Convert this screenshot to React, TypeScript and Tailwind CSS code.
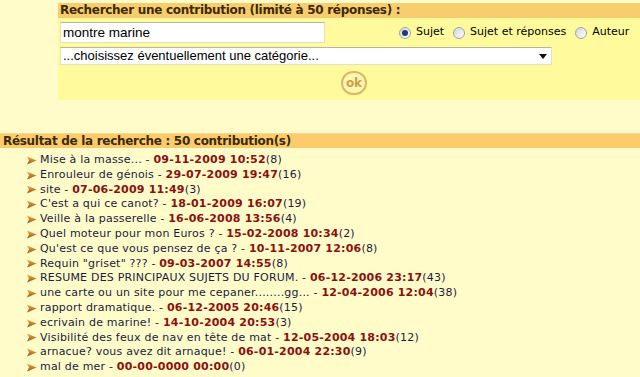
const results: [string, string, string][] = [
  ["Mise à la masse...", "09-11-2009 10:52", "8"],
  ["Enrouleur de génois", "29-07-2009 19:47", "16"],
  ["site", "07-06-2009 11:49", "3"],
  ["C'est a qui ce canot?", "18-01-2009 16:07", "19"],
  ["Veille à la passerelle", "16-06-2008 13:56", "4"],
  ["Quel moteur pour mon Euros ?", "15-02-2008 10:34", "2"],
  ["Qu'est ce que vous pensez de ça ?", "10-11-2007 12:06", "8"],
  ['Requin "griset" ???', "09-03-2007 14:55", "8"],
  ["RESUME DES PRINCIPAUX SUJETS DU FORUM.", "06-12-2006 23:17", "43"],
  ["une carte ou un site pour me cepaner........gg...", "12-04-2006 12:04", "38"],
  ["rapport dramatique.", "06-12-2005 20:46", "15"],
  ["ecrivain de marine!", "14-10-2004 20:53", "3"],
  ["Visibilité des feux de nav en tête de mat", "12-05-2004 18:03", "12"],
  ["arnacue? vous avez dit arnaque!", "06-01-2004 22:30", "9"],
  ["mal de mer", "00-00-0000 00:00", "0"],
];

function Bullet() {
  return (
    <svg width="10" height="9" viewBox="0 0 10 9" className="shrink-0">
      <defs>
        <linearGradient id="bl" x1="0" y1="0" x2="0" y2="1">
          <stop offset="0" stopColor="#f2b24a" />
          <stop offset="1" stopColor="#9a4e10" />
        </linearGradient>
      </defs>
      <polygon points="0,0.5 9.5,4.5 0,8.5 2,4.5" fill="url(#bl)" />
    </svg>
  );
}

function Radio({ checked }: { checked?: boolean }) {
  return (
    <span className="w-[12px] h-[12px] rounded-full border border-[#9ca3af] bg-gradient-to-br from-[#d6d6d6] to-white flex items-center justify-center">
      {checked && <span className="w-[6px] h-[6px] rounded-full bg-[#1f3a78]" />}
    </span>
  );
}

export default function App() {
  return (
    <div className="w-[640px] h-[377px] overflow-hidden bg-[#fffcc9] text-[#1b1b3f] font-['DejaVu_Sans',Verdana,sans-serif]">
      <div className="pl-[58px] pt-[3px]">
        <div className="h-[15px] bg-[#f8cd6e] pl-[2px] text-[12px] leading-[15px] font-bold text-[#3c2a0c] tracking-[-0.3px]">
          Rechercher une contribution (limité à 50 réponses) :
        </div>
        <div className="bg-[#fffa9c] h-[82px] pl-[2px] pt-[4px]">
          <div className="flex items-center">
            <div className="w-[265px] h-[21px] bg-white border border-[#e4e0c8] border-t-[#b8b4a0] pl-[2px] text-[13.5px] leading-[19px] text-black font-['Liberation_Sans',Arial,sans-serif]">
              montre marine
            </div>
            <div className="ml-[74px] flex items-center gap-[5px] text-[11px] text-black">
              <Radio checked />
              <span className="mr-[4px]">Sujet</span>
              <Radio />
              <span className="mr-[4px]">Sujet et réponses</span>
              <Radio />
              <span>Auteur</span>
            </div>
          </div>
          <div className="mt-[4px] w-[492px] h-[18px] bg-white border border-[#e4e0c8] border-t-[#b8b4a0] flex items-center pl-[2px] pr-[4px] text-[13px] text-black font-['Liberation_Sans',Arial,sans-serif]">
            <span className="flex-1">...choisissez éventuellement une catégorie...</span>
            <svg width="8" height="5" viewBox="0 0 8 5">
              <polygon points="0,0 8,0 4,5" fill="#111" />
            </svg>
          </div>
          <div className="flex justify-center pl-[8px] mt-[6px]">
            <div className="w-[26px] h-[24px] rounded-full border-2 border-[#d9b86a] bg-[#fff6b0] flex items-center justify-center text-[12px] font-bold text-[#c9a14a] leading-none">
              ok
            </div>
          </div>
        </div>
      </div>
      <div className="mt-[33px] h-[15px] bg-[#fbcb6c] border-t border-[#f6d995] pl-[3px] text-[12px] leading-[14px] font-bold text-[#3c2a0c] tracking-[-0.3px]">
        Résultat de la recherche : 50 contribution(s)
      </div>
      <ul className="pt-[5px] pl-[27px] text-[11px] leading-[14.8px] tracking-[0.2px]">
        {results.map(([title, date, count], i) => (
          <li key={i} className="flex items-center gap-[3px] whitespace-nowrap">
            <Bullet />
            <span>
              {title} - <b className="text-[#8c1010]">{date}</b>({count})
            </span>
          </li>
        ))}
      </ul>
    </div>
  );
}
